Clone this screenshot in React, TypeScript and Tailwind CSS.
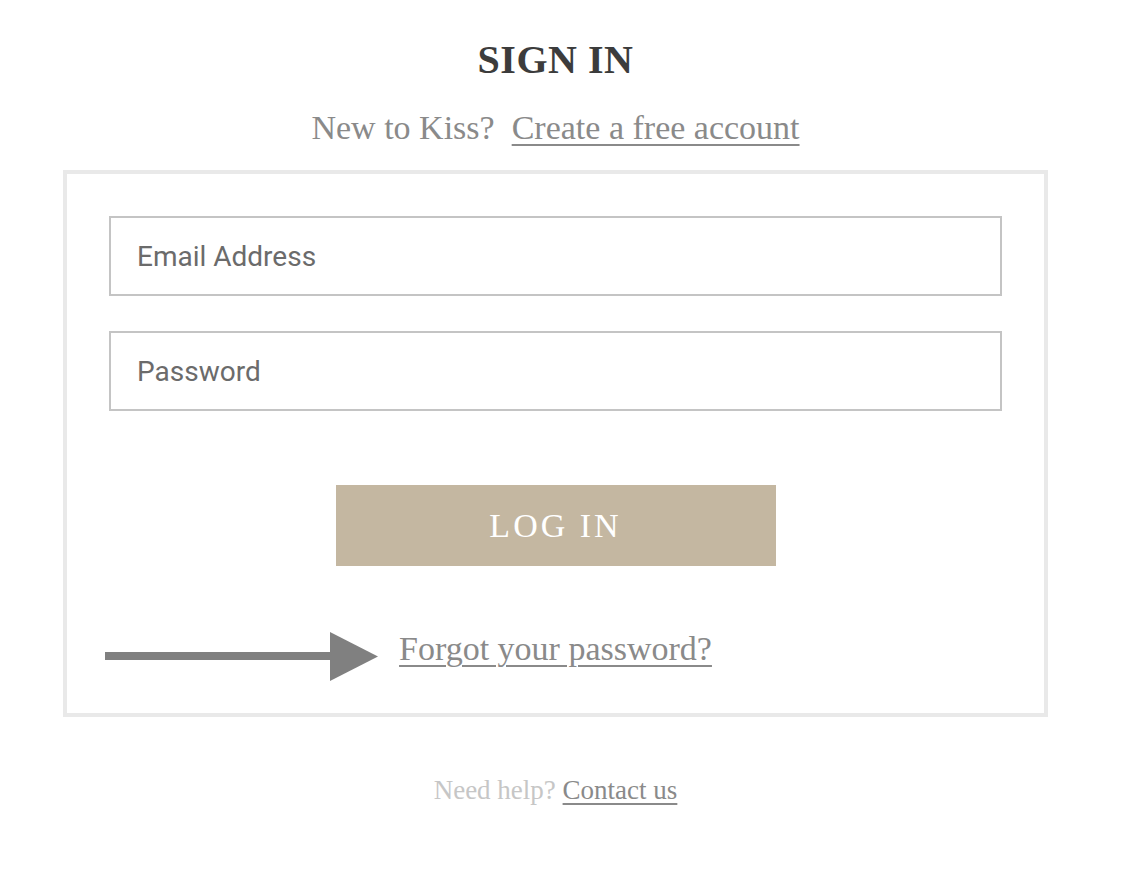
import React from "react";

const serif = { fontFamily: '"Liberation Serif", "Times New Roman", serif' };

export default function App() {
  return (
    <div className="min-h-[878px] w-full bg-white" style={serif}>
      <div className="ml-[63px] flex w-[985px] flex-col items-center pt-[36px]">
        <h1 className="text-[40px] font-bold leading-[48px] tracking-[0.5px] text-[#3c3c3c]">SIGN IN</h1>
        <p className="mt-[24px] text-[34px] leading-[40px] text-[#8a8a8a]">
          New to Kiss?&nbsp;{" "}
          <a href="#" className="underline decoration-[1.5px] underline-offset-[5px]">
            Create a free account
          </a>
        </p>

        <div className="mt-[22px] w-full border-4 border-[#e9e9e9] p-[42px]">
          <form className="flex flex-col gap-[35px]" onSubmit={(e) => e.preventDefault()}>
            <input
              type="email"
              placeholder="Email Address"
              className="h-[80px] w-full border-2 border-[#c4c4c4] px-[26px] text-[28px] text-[#6b6b6b] placeholder-[#6b6b6b] outline-none"
              style={{ fontFamily: "Roboto, sans-serif" }}
            />
            <input
              type="password"
              placeholder="Password"
              className="h-[80px] w-full border-2 border-[#c4c4c4] px-[26px] text-[28px] text-[#6b6b6b] placeholder-[#6b6b6b] outline-none"
              style={{ fontFamily: "Roboto, sans-serif" }}
            />
          </form>

          <div className="mt-[74px] flex justify-center">
            <button className="h-[81px] w-[440px] bg-[#c4b7a1] text-[34px] tracking-[3px] text-white">LOG IN</button>
          </div>

          <div className="relative mt-[61px] flex justify-center">
            <svg
              className="absolute left-[-4px] top-[5px]"
              width="276"
              height="50"
              viewBox="0 0 276 50"
            >
              <rect x="0" y="20" width="228" height="8" fill="#808080" />
              <polygon points="225,0 273,24.5 225,49" fill="#808080" />
            </svg>
            <a
              href="#"
              className="text-[34px] leading-[44px] text-[#8a8a8a] underline decoration-[1.5px] underline-offset-[5px]"
            >
              Forgot your password?
            </a>
          </div>
        </div>

        <p className="mt-[56px] text-[27px] leading-[34px] text-[#c6c6c6]">
          Need help?{" "}
          <a href="#" className="text-[#8a8a8a] underline decoration-[1.5px] underline-offset-[4px]">
            Contact us
          </a>
        </p>
      </div>
    </div>
  );
}
